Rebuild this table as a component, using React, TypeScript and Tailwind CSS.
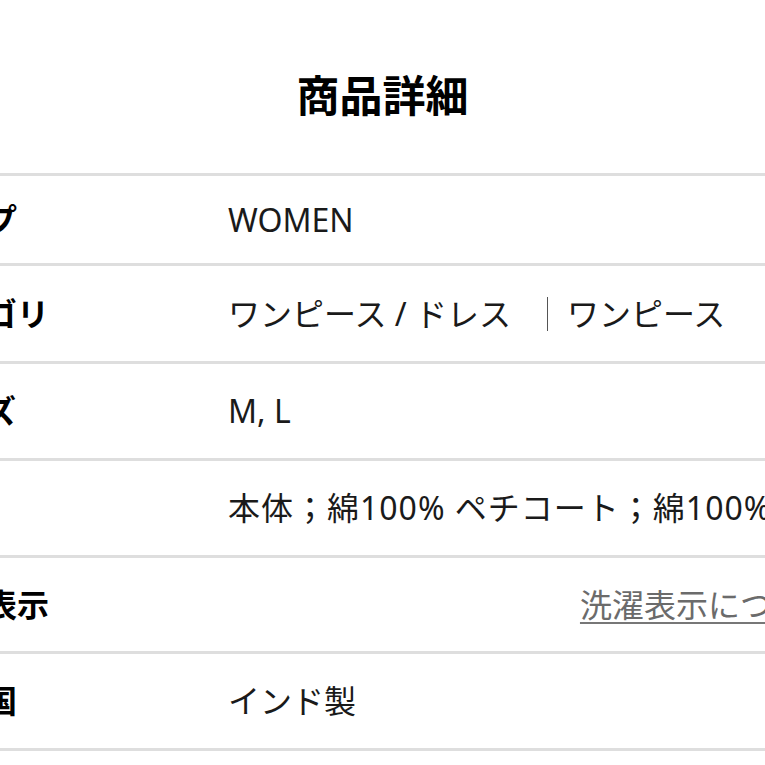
const font = "font-['Noto_Sans','Noto_Sans_CJK_JP',sans-serif]";

type Row = {
    label: string;
    content: React.ReactNode;
    height: string;
};

const rows: Row[] = [
    { label: "タイプ", content: "WOMEN", height: "h-[90px]" },
    {
        label: "カテゴリ",
        content: (
            <div className="flex items-center">
                <span className="pr-[36px]">ワンピース / ドレス</span>
                <span className="border-l border-[#555] pl-[19px] leading-[34px]">ワンピース</span>
            </div>
        ),
        height: "h-[98px]",
    },
    { label: "サイズ", content: "M, L", height: "h-[97px]" },
    {
        label: "素材",
        content: <span className="tracking-[1px]">本体；綿100% ペチコート；綿100%</span>,
        height: "h-[97px]",
    },
    {
        label: "洗濯表示",
        content: (
            <div className="flex justify-end">
                <span className="text-[#6b6b6b] underline decoration-[#777] decoration-2 underline-offset-[5px]">
                    洗濯表示について
                </span>
            </div>
        ),
        height: "h-[96px]",
    },
    { label: "原産国", content: "インド製", height: "h-[97px]" },
];

export default function App() {
    return (
        <div className={`w-[765px] h-[765px] overflow-hidden bg-white ${font}`}>
            <h2 className="pt-[64px] text-center text-[43px] leading-[64px] font-bold text-black">
                商品詳細
            </h2>

            <div className="mt-[45px] ml-[-79px] w-[914px] border-t-[3px] border-[#dedede]">
                {rows.map((row) => (
                    <div
                        key={row.label}
                        className={`flex items-center border-b-[3px] border-[#dedede] ${row.height}`}
                    >
                        <div className="w-[307px] shrink-0 whitespace-nowrap text-[32px] font-bold text-black">
                            {row.label}
                        </div>
                        <div className="flex-1 whitespace-nowrap text-[32px] text-[#1a1a1a]">
                            {row.content}
                        </div>
                    </div>
                ))}
            </div>
        </div>
    );
}
